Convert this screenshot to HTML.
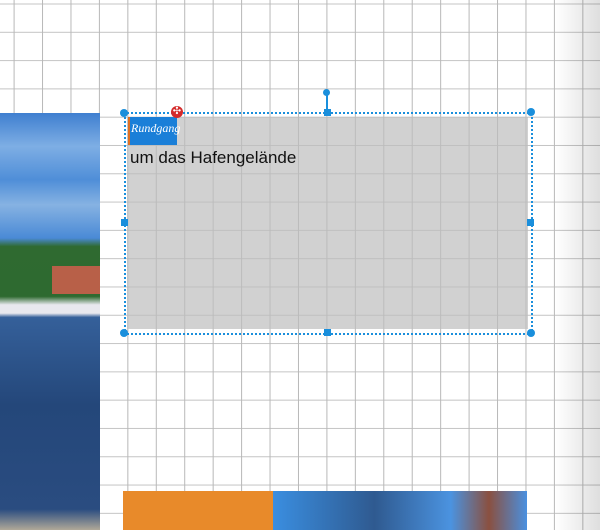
<!DOCTYPE html>
<html><head><style>
body{margin:0;width:600px;height:530px;overflow:hidden;position:relative;font-family:"Liberation Sans",sans-serif;
background-color:#fff;
background-image:linear-gradient(to right,#b8b8b8 1px,transparent 1px),linear-gradient(to bottom,#c4c4c4 1px,transparent 1px);
background-size:28.45px 28.3px;background-position:13.6px 3.5px;}
.abs{position:absolute}
</style></head><body>
<div class="abs" style="left:555px;top:0;width:45px;height:530px;background:linear-gradient(to right,rgba(0,0,0,0),rgba(0,0,0,0.13))"></div>
<div class="abs" style="left:0;top:113px;width:100px;height:417px;background:linear-gradient(to bottom,#3f7fd0 0%,#7eaee4 8%,#4f8ed8 16%,#86b2e2 22%,#4a8ad6 30%,#2f6a30 32%,#2e6a30 44%,#e8e8ee 46%,#e8e8ee 48%,#35609a 49%,#24477a 70%,#2a4c80 95%,#b0a898 100%)"></div>
<div class="abs" style="left:52px;top:266px;width:48px;height:28px;background:#b86048"></div>
<div class="abs" style="left:123px;top:491px;width:150px;height:39px;background:#e88a2a"></div>
<div class="abs" style="left:273px;top:491px;width:254px;height:39px;background:linear-gradient(to right,#3a8ee0,#2f5a90 40%,#4b93e0 70%,#8a5040 85%,#4a90e0)"></div>
<div class="abs" style="left:127px;top:117px;width:401px;height:212px;background:rgba(190,190,190,0.7)"></div>
<div class="abs" style="left:124px;top:112px;width:405px;height:219px;border:2px dotted #1a8fdc"></div>
<div class="abs" style="left:326px;top:93px;width:2px;height:20px;background:#1a8fdc"></div>
<div class="abs" style="left:323px;top:89px;width:7px;height:7px;border-radius:50%;background:#1a8fdc"></div>
<div class="abs" style="left:120px;top:109px;width:8px;height:8px;border-radius:50%;background:#1a8fdc"></div>
<div class="abs" style="left:527px;top:108px;width:8px;height:8px;border-radius:50%;background:#1a8fdc"></div>
<div class="abs" style="left:120px;top:329px;width:8px;height:8px;border-radius:50%;background:#1a8fdc"></div>
<div class="abs" style="left:527px;top:329px;width:8px;height:8px;border-radius:50%;background:#1a8fdc"></div>
<div class="abs" style="left:324px;top:109px;width:7px;height:7px;background:#1a8fdc"></div>
<div class="abs" style="left:324px;top:329px;width:7px;height:7px;background:#1a8fdc"></div>
<div class="abs" style="left:121px;top:219px;width:7px;height:7px;background:#1a8fdc"></div>
<div class="abs" style="left:527px;top:219px;width:7px;height:7px;background:#1a8fdc"></div>
<div class="abs" style="left:128px;top:117px;width:49px;height:28px;background:#1a7fd8;border-left:2px solid #e07020;box-sizing:border-box"></div>
<div class="abs" style="left:131px;top:121px;color:#fff;font-family:'Liberation Serif',serif;font-style:italic;font-size:12px">Rundgang</div>
<div class="abs" style="left:171px;top:106px;width:12px;height:12px;border-radius:50%;background:#d42a2a;color:#fff;font-size:10px;line-height:12px;text-align:center">✣</div>
<div class="abs" style="left:130px;top:148px;font-size:17px;color:#111">um das Hafengelände</div>
</body></html>
